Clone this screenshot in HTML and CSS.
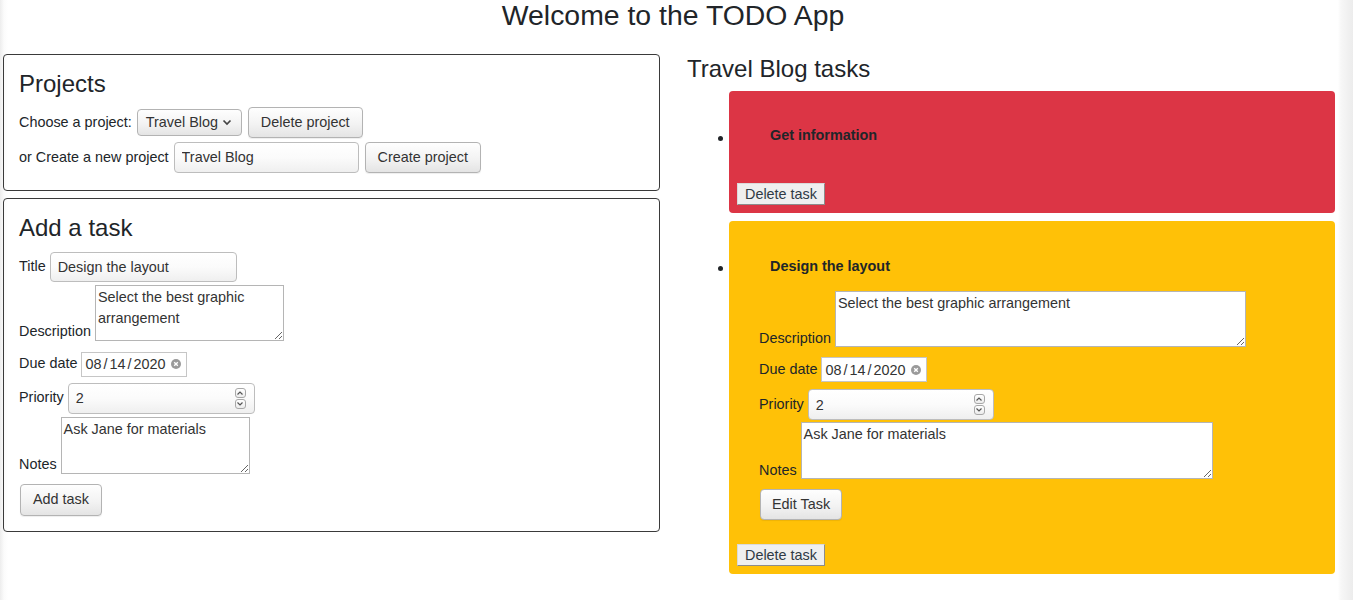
FILE: index.html
```html
<!DOCTYPE html>
<html lang="en">
<head>
<meta charset="utf-8">
<title>TODO App</title>
<link rel="stylesheet" href="styles.css">
</head>
<body>
<div class="page">
  <h1 class="app-title">Welcome to the TODO App</h1>
  <div class="layout">
    <div class="left">
      <section class="panel projects">
        <h2>Projects</h2>
        <div class="prow">
          <label>Choose a project:</label>
          <div class="select">
            <span>Travel Blog</span>
            <svg class="chev" width="10" height="7" viewBox="0 0 10 7"><path d="M1.5 1.5 L5 5 L8.5 1.5" fill="none" stroke="#444" stroke-width="1.7"/></svg>
          </div>
          <button class="btn">Delete project</button>
        </div>
        <div class="prow">
          <label>or Create a new project</label>
          <input class="tf tf-project" type="text" value="Travel Blog">
          <button class="btn">Create project</button>
        </div>
      </section>

      <section class="panel add">
        <h2>Add a task</h2>
        <div class="frow">
          <label>Title</label>
          <input class="tf tf-title" type="text" value="Design the layout">
        </div>
        <div class="frow tall add-desc">
          <label>Description</label>
          <textarea class="ta ta-left">Select the best graphic arrangement</textarea>
        </div>
        <div class="frow add-date">
          <label>Due date</label>
          <div class="date">
            <span class="dval">08<span class="sep">/</span>14<span class="sep">/</span>2020</span>
            <svg class="clear" width="10" height="10" viewBox="0 0 10 10"><circle cx="5" cy="5" r="5" fill="#9a9a9a"/><path d="M3.2 3.2 L6.8 6.8 M6.8 3.2 L3.2 6.8" stroke="#fff" stroke-width="1.4"/></svg>
          </div>
        </div>
        <div class="frow add-prio">
          <label>Priority</label>
          <div class="num">
            <span>2</span>
            <div class="spin">
              <span class="spin-btn"><svg width="8" height="6" viewBox="0 0 8 6"><path d="M1.5 4.5 L4 2 L6.5 4.5" fill="none" stroke="#555" stroke-width="1.2"/></svg></span>
              <span class="spin-btn"><svg width="8" height="6" viewBox="0 0 8 6"><path d="M1.5 1.5 L4 4 L6.5 1.5" fill="none" stroke="#555" stroke-width="1.2"/></svg></span>
            </div>
          </div>
        </div>
        <div class="frow tall add-notes">
          <label>Notes</label>
          <textarea class="ta ta-left ta-notes">Ask Jane for materials</textarea>
        </div>
        <div class="frow add-submit">
          <button class="btn btn-add">Add task</button>
        </div>
      </section>
    </div>

    <div class="right">
      <h2 class="tasks-heading">Travel Blog tasks</h2>
      <ul class="tasks">
        <li class="task">
          <div class="card red">
            <div class="task-title">Get information</div>
            <button class="del-btn">Delete task</button>
          </div>
        </li>
        <li class="task">
          <div class="card yellow">
            <div class="task-title">Design the layout</div>
            <div class="edit-form">
              <div class="frow tall">
                <label>Description</label>
                <textarea class="ta ta-wide">Select the best graphic arrangement</textarea>
              </div>
              <div class="frow edit-date">
                <label>Due date</label>
                <div class="date">
                  <span class="dval">08<span class="sep">/</span>14<span class="sep">/</span>2020</span>
                  <svg class="clear" width="10" height="10" viewBox="0 0 10 10"><circle cx="5" cy="5" r="5" fill="#9a9a9a"/><path d="M3.2 3.2 L6.8 6.8 M6.8 3.2 L3.2 6.8" stroke="#fff" stroke-width="1.4"/></svg>
                </div>
              </div>
              <div class="frow edit-prio">
                <label>Priority</label>
                <div class="num num-edit">
                  <span>2</span>
                  <div class="spin">
                    <span class="spin-btn"><svg width="8" height="6" viewBox="0 0 8 6"><path d="M1.5 4.5 L4 2 L6.5 4.5" fill="none" stroke="#555" stroke-width="1.2"/></svg></span>
                    <span class="spin-btn"><svg width="8" height="6" viewBox="0 0 8 6"><path d="M1.5 1.5 L4 4 L6.5 1.5" fill="none" stroke="#555" stroke-width="1.2"/></svg></span>
                  </div>
                </div>
              </div>
              <div class="frow tall edit-notes">
                <label>Notes</label>
                <textarea class="ta ta-wide ta-notes ta-notes-wide">Ask Jane for materials</textarea>
              </div>
              <div class="frow edit-submit">
                <button class="btn btn-edit">Edit Task</button>
              </div>
            </div>
            <button class="del-btn">Delete task</button>
          </div>
        </li>
      </ul>
    </div>
  </div>
</div>
</body>
</html>
```

FILE: styles.css
```css
html {
  background: linear-gradient(to right, #ededed 0, #fbfbfb 4px, #ffffff 8px, #ffffff 1338px, #f7f7f7 1341px, #ececec 1353px);
  min-height: 100%;
}

body {
  margin: 0;
  font-family: "Liberation Sans", Arial, sans-serif;
  font-size: 14.4px;
  color: #212529;
}

.page {
  width: 1338px;
}

.app-title {
  margin: 0 0 24px;
  padding: 1px 0 0 8px;
  font-size: 28.4px;
  font-weight: 400;
  line-height: 28px;
  text-align: center;
}

h2 {
  margin: 0 0 9px;
  font-size: 24px;
  font-weight: 400;
  line-height: 1.2;
}

.layout {
  display: flex;
  align-items: flex-start;
}

.left {
  width: 657px;
  margin-left: 3px;
  padding-top: 1px;
}

.right {
  flex: 1;
  margin-left: 27px;
  padding-right: 3px;
}

.tasks-heading {
  margin: 2px 0 0;
}

.panel {
  border: 1px solid #3a3a3a;
  border-radius: 4px;
  padding: 15px 15px 15px;
}

.panel + .panel {
  margin-top: 7px;
}

.projects {
  padding-bottom: 17px;
}

.projects h2 {
  margin-bottom: 8px;
}

label {
  line-height: 1.2;
  white-space: nowrap;
}

/* project rows */
.prow {
  display: flex;
  align-items: center;
  gap: 5px;
}

.prow + .prow {
  margin-top: 4px;
}

.prow .btn {
  margin-left: 1px;
}

/* generic controls */
.btn {
  height: 31px;
  padding: 0 12px;
  border: 1px solid #b3b3b3;
  border-radius: 4px;
  background: linear-gradient(#fefefe, #f3f3f3 55%, #e4e4e4);
  box-shadow: 0 1px 1px rgba(0, 0, 0, 0.07);
  color: #333;
  font: inherit;
  line-height: 1;
}

.select {
  box-sizing: border-box;
  display: flex;
  align-items: center;
  width: 105px;
  height: 27px;
  padding: 0 9px 0 8px;
  border: 1px solid #b3b3b3;
  border-radius: 4px;
  background: linear-gradient(#fefefe, #f3f3f3 55%, #e4e4e4);
  color: #333;
}

.select .chev {
  margin-left: auto;
}

.tf {
  box-sizing: border-box;
  height: 31px;
  margin: 0;
  padding: 0 7px;
  border: 1px solid #bdbdbd;
  border-radius: 4px;
  background: linear-gradient(#ffffff, #fbfbfb 50%, #efefef);
  color: #333;
  font: inherit;
  -webkit-appearance: none;
  appearance: none;
  outline: none;
}

.tf-project {
  width: 185px;
}

.tf-title {
  width: 187px;
  height: 30px;
}

.ta {
  box-sizing: border-box;
  display: block;
  margin: 0;
  padding: 1px 2px;
  border: 1px solid #b5b5b5;
  background: #fff;
  color: #333;
  font: inherit;
  line-height: 21px;
  height: 56px;
  overflow: hidden;
  outline: none;
}

.ta-left {
  width: 189px;
}

.ta-notes {
  height: 57px;
}

.ta-wide {
  width: 411px;
}

.ta-notes-wide {
  width: 412px;
}

.date {
  box-sizing: border-box;
  display: flex;
  align-items: center;
  width: 106px;
  height: 25px;
  padding: 0 5px 0 3px;
  border: 1px solid #c6c6c6;
  background: #fff;
  color: #333;
  white-space: nowrap;
}

.date .sep {
  margin: 0 2px;
}

.date .clear {
  margin-left: auto;
}

.num {
  box-sizing: border-box;
  display: flex;
  align-items: center;
  width: 187px;
  height: 31px;
  padding: 0 8px 0 7px;
  border: 1px solid #bdbdbd;
  border-radius: 4px;
  background: linear-gradient(#ffffff, #fbfbfb 50%, #efefef);
  color: #333;
}

.num-edit {
  width: 186px;
}

.spin {
  margin-left: auto;
  display: flex;
  flex-direction: column;
  gap: 1px;
}

.spin-btn {
  box-sizing: border-box;
  display: flex;
  align-items: center;
  justify-content: center;
  width: 11px;
  height: 10px;
  border: 1px solid #a8a8a8;
  border-radius: 3px;
  background: linear-gradient(#ffffff, #ececec);
}

/* add-task form rows */
.frow {
  display: flex;
  align-items: center;
  gap: 4px;
}

.frow.tall {
  align-items: flex-end;
}

.add-desc { margin-top: 3px; }
.add-date { margin-top: 11px; }
.add-prio { margin-top: 6px; }
.add-notes { margin-top: 3px; }
.add-submit { margin-top: 10px; }

.btn-add {
  height: 32px;
  margin-left: 1px;
}

/* tasks */
.tasks {
  margin: 7px 0 0;
  padding-left: 42px;
  list-style: none;
}

.task {
  position: relative;
  margin-bottom: 8px;
}

.task::before {
  content: "";
  position: absolute;
  left: -11px;
  top: 45px;
  width: 5px;
  height: 5px;
  border-radius: 50%;
  background: #212529;
}

.card {
  border-radius: 4px;
  padding: 8px;
}

.red {
  background: #dc3545;
}

.yellow {
  background: #ffc107;
}

.task-title {
  margin: 28.7px 0 0 33px;
  font-weight: 700;
  line-height: 16.5px;
  color: #212529;
}

.del-btn {
  display: block;
  box-sizing: border-box;
  height: 22px;
  margin-top: 24px;
  padding: 0 7px;
  border: 1px solid;
  border-color: #dadada #8c8c8c #8c8c8c #dadada;
  background: #efefef;
  color: #2f3a45;
  font: inherit;
  line-height: 1;
}

.task-title + .del-btn {
  margin-top: 39px;
}

.edit-form {
  margin: 17px 0 0 22px;
}

.edit-date { margin-top: 10px; }
.edit-prio { margin-top: 7px; }
.edit-notes { margin-top: 2px; }
.edit-submit { margin-top: 10px; }

.btn-edit {
  margin-left: 1px;
  padding: 0 11px;
}
```
